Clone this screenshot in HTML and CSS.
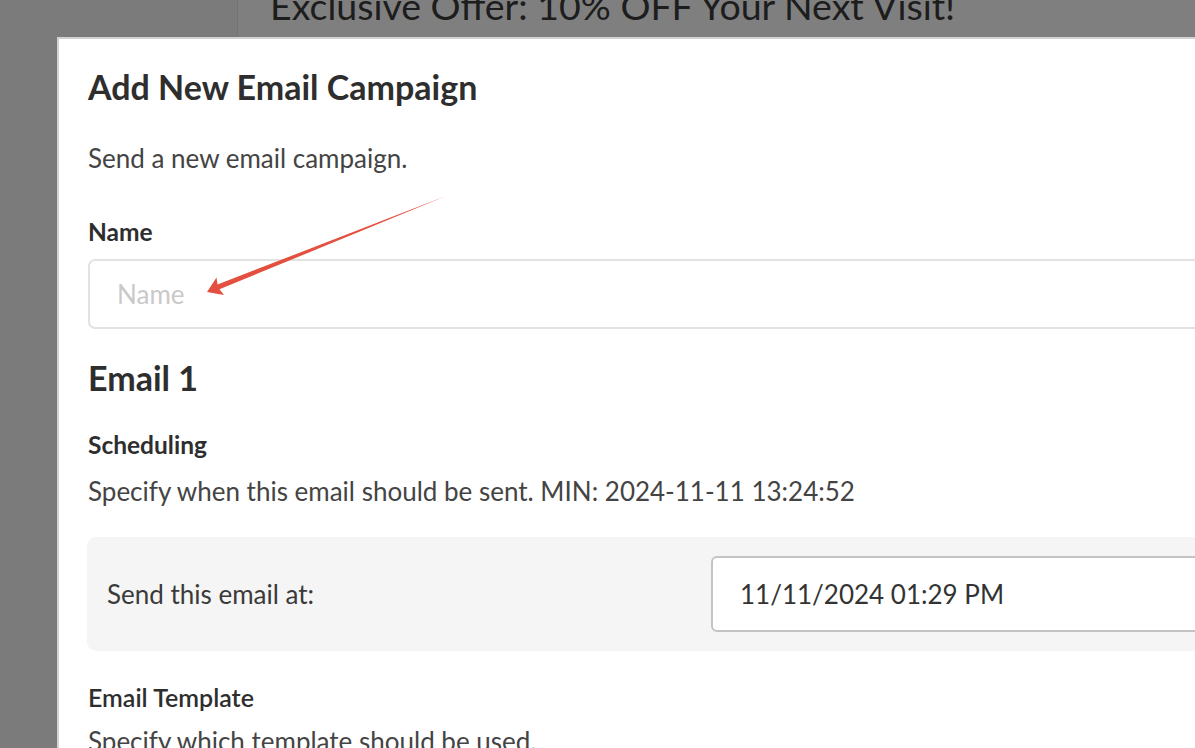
FILE: index.html
```html
<!DOCTYPE html>
<html lang="en">
<head>
<meta charset="utf-8">
<title>Add New Email Campaign</title>
<link rel="stylesheet" href="styles.css">
</head>
<body>
<div class="page">
  <aside class="sidebar"></aside>
  <main class="main">
    <h1 class="offer">Exclusive Offer: 10% OFF Your Next Visit!</h1>
  </main>
</div>

<div class="backdrop">
  <div class="modal">
    <h2 class="modal-title">Add New Email Campaign</h2>
    <p class="modal-sub">Send a new email campaign.</p>

    <label class="field-label" for="name">Name</label>
    <input class="text-input" id="name" type="text" placeholder="Name">

    <h3 class="section-title">Email 1</h3>

    <h4 class="group-title">Scheduling</h4>
    <p class="group-desc">Specify when this email should be sent. MIN: 2024-11-11 13:24:52</p>

    <div class="schedule-box">
      <span class="schedule-label">Send this email at:</span>
      <div class="date-input">11/11/2024 01:29 PM</div>
    </div>

    <h4 class="group-title template-title">Email Template</h4>
    <p class="group-desc template-desc">Specify which template should be used.</p>
  </div>
</div>

<svg class="annotation" width="1195" height="748" viewBox="0 0 1195 748" aria-hidden="true">
  <polygon fill="#e4503f" points="446,196 217.5,284.5 216.5,277.5 207,292 224,295 219.5,289.3"/>
</svg>
</body>
</html>
```
FILE: styles.css
```css
html, body {
  margin: 0;
  padding: 0;
  width: 1195px;
  height: 748px;
  overflow: hidden;
  font-family: Lato, "Noto Sans", sans-serif;
}

.page {
  display: flex;
  height: 748px;
  background: #ffffff;
}

.sidebar {
  width: 237px;
  flex: none;
  background: #f6f6f6;
  border-right: 1px solid #e6e6e6;
}

.main {
  flex: 1;
  padding-left: 32px;
}

.offer {
  margin: -14px 0 0;
  font-size: 37.5px;
  line-height: 40px;
  font-weight: 400;
  color: #3a3a3a;
  white-space: nowrap;
}

.backdrop {
  position: fixed;
  inset: 0;
  background: rgba(0, 0, 0, 0.5);
}

.modal {
  position: absolute;
  left: 57px;
  top: 37px;
  width: 1300px;
  height: 760px;
  box-sizing: border-box;
  background: #ffffff;
  border-left: 2px solid #d2d2d2;
  border-top: 2px solid #d2d2d2;
  padding: 28px 0 0 29px;
  display: flex;
  flex-direction: column;
  align-items: flex-start;
}

.modal-title {
  margin: 0;
  font-size: 34px;
  line-height: 40px;
  font-weight: 700;
  color: #2e2e2e;
}

.modal-sub {
  margin: 36px 0 0;
  font-size: 26px;
  line-height: 30px;
  color: #444;
}

.field-label {
  margin-top: 44px;
  font-size: 24.5px;
  line-height: 30px;
  font-weight: 700;
  color: #2e2e2e;
}

.text-input {
  margin-top: 12px;
  width: 1200px;
  height: 70px;
  box-sizing: border-box;
  border: 2px solid #e2e2e2;
  border-radius: 7px;
  padding: 0 27px;
  font-family: inherit;
  font-size: 26px;
  color: #333;
  outline: none;
}

.text-input::placeholder {
  color: #c9c9c9;
}

.section-title {
  margin: 29px 0 0;
  font-size: 34px;
  line-height: 40px;
  font-weight: 700;
  color: #2e2e2e;
}

.group-title {
  margin: 32px 0 0;
  font-size: 24.5px;
  line-height: 30px;
  font-weight: 700;
  color: #2e2e2e;
}

.group-desc {
  margin: 16px 0 0;
  font-size: 26px;
  line-height: 30px;
  color: #444;
}

.schedule-box {
  margin: 31px 0 0 -1px;
  width: 1200px;
  height: 114px;
  box-sizing: border-box;
  background: #f5f5f5;
  border-radius: 9px;
  padding: 19px 0 19px 20px;
  display: flex;
  align-items: center;
}

.schedule-label {
  flex: 0 0 604px;
  font-size: 26px;
  color: #3a3a3a;
}

.date-input {
  flex: 1;
  height: 76px;
  box-sizing: border-box;
  background: #fff;
  border: 2px solid #c4c4c4;
  border-radius: 6px;
  padding: 0 27px;
  display: flex;
  align-items: center;
  font-size: 26px;
  color: #333;
}

.template-title {
  margin-top: 31px;
  font-size: 25px;
  font-weight: 600;
}

.template-desc {
  margin-top: 14px;
}

.annotation {
  position: fixed;
  left: 0;
  top: 0;
  pointer-events: none;
}
```
